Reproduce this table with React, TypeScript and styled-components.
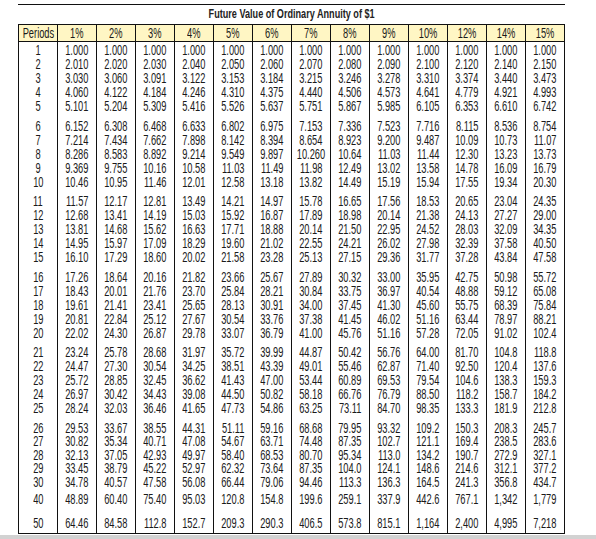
import React from 'react';
import styled, { createGlobalStyle } from 'styled-components';

const GlobalStyle = createGlobalStyle`
  html, body {
    margin: 0;
    padding: 0;
    background: #ffffff;
  }
`;

const Page = styled.div`
  width: 596px;
  height: 539px;
  position: relative;
  overflow: hidden;
  font-family: "Liberation Sans", Arial, sans-serif;
  color: #1a1a1a;
`;

const Sheet = styled.div`
  margin-left: 18px;
  width: 547px;
  padding-top: 4px;
`;

const TopRule = styled.div`
  border-top: 1px solid #111;
`;

const Title = styled.div`
  height: 19px;
  line-height: 17px;
  text-align: center;
  font-size: 13px;
  font-weight: 700;
  color: #222;
`;

// the sheet uses a condensed face; squeeze the regular one to its width
const Narrow = styled.span<{ $scale?: number }>`
  display: inline-block;
  margin: 0 -14px;
  transform: scaleX(${p => p.$scale ?? 0.62});
  transform-origin: center;
  white-space: nowrap;
`;

const Table = styled.table`
  width: 547px;
  border-collapse: collapse;
  table-layout: fixed;
`;

const HeadCell = styled.th`
  height: 16px;
  padding: 0;
  line-height: 16px;
  font-size: 15px;
  font-weight: 400;
  text-align: center;
  background: #fff6c4;
  border: 1.5px solid #111;
  color: #1a1a1a;
  overflow: visible;
`;

const Cell = styled.td<{ $top: number; $bottom: number; $line: number }>`
  padding: ${p => p.$top}px 0 ${p => p.$bottom}px;
  line-height: ${p => p.$line}px;
  font-size: 15px;
  text-align: center;
  border-left: 1.5px solid #111;
  border-right: 1.5px solid #111;
  white-space: nowrap;
`;

const LastRow = styled.tr`
  & > td {
    border-bottom: 1.5px solid #111;
  }
`;

const Footer = styled.div`
  position: absolute;
  left: 0;
  right: 0;
  bottom: 0;
  height: 4px;
  background: #d2d2d2;
`;

const rates = ['1%', '2%', '3%', '4%', '5%', '6%', '7%', '8%', '9%', '10%', '12%', '14%', '15%'];

const raw = `
1 1.000 1.000 1.000 1.000 1.000 1.000 1.000 1.000 1.000 1.000 1.000 1.000 1.000
2 2.010 2.020 2.030 2.040 2.050 2.060 2.070 2.080 2.090 2.100 2.120 2.140 2.150
3 3.030 3.060 3.091 3.122 3.153 3.184 3.215 3.246 3.278 3.310 3.374 3.440 3.473
4 4.060 4.122 4.184 4.246 4.310 4.375 4.440 4.506 4.573 4.641 4.779 4.921 4.993
5 5.101 5.204 5.309 5.416 5.526 5.637 5.751 5.867 5.985 6.105 6.353 6.610 6.742
6 6.152 6.308 6.468 6.633 6.802 6.975 7.153 7.336 7.523 7.716 8.115 8.536 8.754
7 7.214 7.434 7.662 7.898 8.142 8.394 8.654 8.923 9.200 9.487 10.09 10.73 11.07
8 8.286 8.583 8.892 9.214 9.549 9.897 10.260 10.64 11.03 11.44 12.30 13.23 13.73
9 9.369 9.755 10.16 10.58 11.03 11.49 11.98 12.49 13.02 13.58 14.78 16.09 16.79
10 10.46 10.95 11.46 12.01 12.58 13.18 13.82 14.49 15.19 15.94 17.55 19.34 20.30
11 11.57 12.17 12.81 13.49 14.21 14.97 15.78 16.65 17.56 18.53 20.65 23.04 24.35
12 12.68 13.41 14.19 15.03 15.92 16.87 17.89 18.98 20.14 21.38 24.13 27.27 29.00
13 13.81 14.68 15.62 16.63 17.71 18.88 20.14 21.50 22.95 24.52 28.03 32.09 34.35
14 14.95 15.97 17.09 18.29 19.60 21.02 22.55 24.21 26.02 27.98 32.39 37.58 40.50
15 16.10 17.29 18.60 20.02 21.58 23.28 25.13 27.15 29.36 31.77 37.28 43.84 47.58
16 17.26 18.64 20.16 21.82 23.66 25.67 27.89 30.32 33.00 35.95 42.75 50.98 55.72
17 18.43 20.01 21.76 23.70 25.84 28.21 30.84 33.75 36.97 40.54 48.88 59.12 65.08
18 19.61 21.41 23.41 25.65 28.13 30.91 34.00 37.45 41.30 45.60 55.75 68.39 75.84
19 20.81 22.84 25.12 27.67 30.54 33.76 37.38 41.45 46.02 51.16 63.44 78.97 88.21
20 22.02 24.30 26.87 29.78 33.07 36.79 41.00 45.76 51.16 57.28 72.05 91.02 102.4
21 23.24 25.78 28.68 31.97 35.72 39.99 44.87 50.42 56.76 64.00 81.70 104.8 118.8
22 24.47 27.30 30.54 34.25 38.51 43.39 49.01 55.46 62.87 71.40 92.50 120.4 137.6
23 25.72 28.85 32.45 36.62 41.43 47.00 53.44 60.89 69.53 79.54 104.6 138.3 159.3
24 26.97 30.42 34.43 39.08 44.50 50.82 58.18 66.76 76.79 88.50 118.2 158.7 184.2
25 28.24 32.03 36.46 41.65 47.73 54.86 63.25 73.11 84.70 98.35 133.3 181.9 212.8
26 29.53 33.67 38.55 44.31 51.11 59.16 68.68 79.95 93.32 109.2 150.3 208.3 245.7
27 30.82 35.34 40.71 47.08 54.67 63.71 74.48 87.35 102.7 121.1 169.4 238.5 283.6
28 32.13 37.05 42.93 49.97 58.40 68.53 80.70 95.34 113.0 134.2 190.7 272.9 327.1
29 33.45 38.79 45.22 52.97 62.32 73.64 87.35 104.0 124.1 148.6 214.6 312.1 377.2
30 34.78 40.57 47.58 56.08 66.44 79.06 94.46 113.3 136.3 164.5 241.3 356.8 434.7
40 48.89 60.40 75.40 95.03 120.8 154.8 199.6 259.1 337.9 442.6 767.1 1,342 1,779
50 64.46 84.58 112.8 152.7 209.3 290.3 406.5 573.8 815.1 1,164 2,400 4,995 7,218
`;

const rows = raw.trim().split('\n').map(line => line.trim().split(/\s+/));

// spacing per row: groups of five are set apart by a small gap
const rowSpacing = (i: number) => {
  if (i === 0) return { top: 1, line: 14 };
  if (i === 30) return { top: 3.5, line: 14 };
  if (i === 31) return { top: 10.25, line: 14 };
  const line = i >= 25 ? 13.5 : 14;
  return { top: i % 5 === 0 ? 5.5 : 0, line };
};

export default function App() {
  return (
    <Page>
      <GlobalStyle />
      <Sheet>
        <TopRule />
        <Title>
          <Narrow $scale={0.7}>Future Value of Ordinary Annuity of $1</Narrow>
        </Title>
        <Table>
          <thead>
            <tr>
              <HeadCell>
                <Narrow>Periods</Narrow>
              </HeadCell>
              {rates.map(r => (
                <HeadCell key={r}>
                  <Narrow>{r}</Narrow>
                </HeadCell>
              ))}
            </tr>
          </thead>
          <tbody>
            {rows.map((row, i) => {
              const { top, line } = rowSpacing(i);
              const last = i === rows.length - 1;
              const cells = row.map((v, j) => (
                <Cell key={j} $top={top} $bottom={last ? 3 : 0} $line={line}>
                  <Narrow>{v}</Narrow>
                </Cell>
              ));
              return last ? <LastRow key={i}>{cells}</LastRow> : <tr key={i}>{cells}</tr>;
            })}
          </tbody>
        </Table>
      </Sheet>
      <Footer />
    </Page>
  );
}
